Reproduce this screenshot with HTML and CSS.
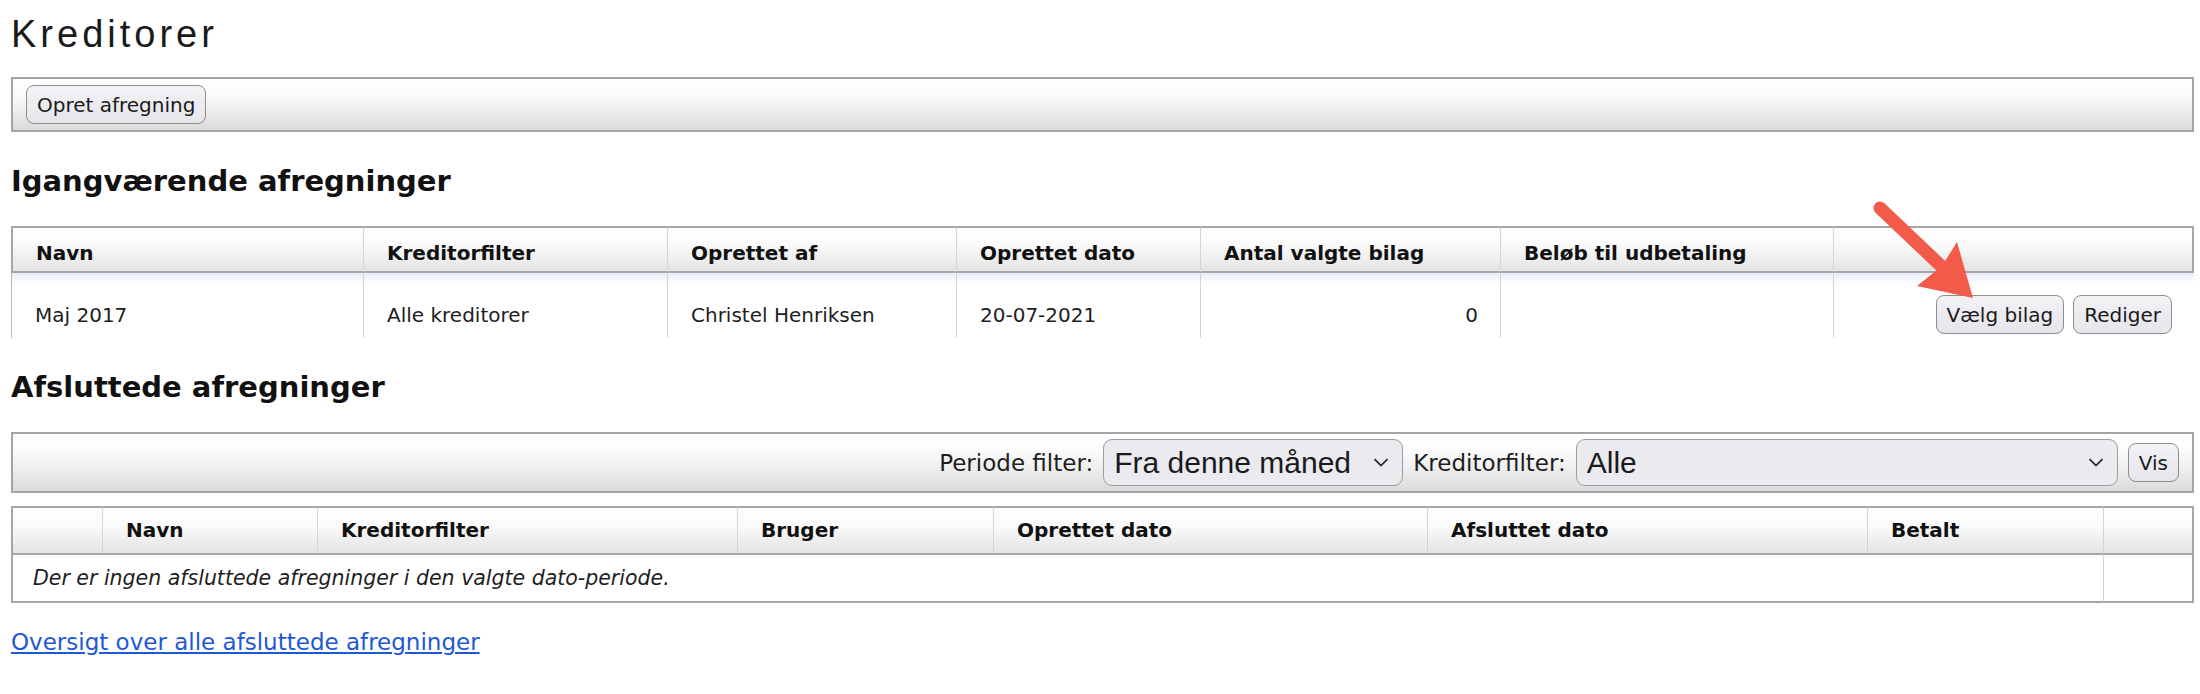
FILE: index.html
```html
<!DOCTYPE html>
<html lang="da">
<head>
  <meta charset="utf-8">
  <title>Kreditorer</title>
  <meta name="viewport" content="width=device-width, initial-scale=1.0">
  <link rel="stylesheet" href="styles.css">
</head>
<body>
<div class="page">

  <h1>Kreditorer</h1>

  <div class="toolbar toolbar-main">
    <button>Opret afregning</button>
  </div>

  <!-- Igangværende -->
  <h2>Igangværende afregninger</h2>
  <table class="grid open">
    <colgroup>
      <col><col><col><col><col><col><col>
    </colgroup>
    <thead>
      <tr>
        <th>Navn</th>
        <th>Kreditorfilter</th>
        <th>Oprettet af</th>
        <th>Oprettet dato</th>
        <th>Antal valgte bilag</th>
        <th>Beløb til udbetaling</th>
        <th></th>
      </tr>
    </thead>
    <tbody>
      <tr>
        <td>Maj 2017</td>
        <td>Alle kreditorer</td>
        <td>Christel Henriksen</td>
        <td>20-07-2021</td>
        <td class="num">0</td>
        <td></td>
        <td class="actions"><button>Vælg bilag</button><button>Rediger</button></td>
      </tr>
    </tbody>
  </table>

  <!-- Afsluttede -->
  <h2>Afsluttede afregninger</h2>
  <div class="toolbar toolbar-filter">
    <label class="filter-label" for="periode">Periode filter:</label>
    <span class="select period">
      <select id="periode">
        <option>Fra denne måned</option>
      </select>
      <svg class="chevron" width="16" height="9" viewBox="0 0 16 9"><path d="M1.5 1.2 8 7.6l6.5-6.4" fill="none" stroke="#2a2a2a" stroke-width="1.8"/></svg>
    </span>
    <label class="filter-label" for="kreditor">Kreditorfilter:</label>
    <span class="select creditor">
      <select id="kreditor">
        <option>Alle</option>
      </select>
      <svg class="chevron" width="16" height="9" viewBox="0 0 16 9"><path d="M1.5 1.2 8 7.6l6.5-6.4" fill="none" stroke="#2a2a2a" stroke-width="1.8"/></svg>
    </span>
    <button>Vis</button>
  </div>

  <table class="grid closed">
    <colgroup>
      <col><col><col><col><col><col><col><col>
    </colgroup>
    <thead>
      <tr>
        <th></th>
        <th>Navn</th>
        <th>Kreditorfilter</th>
        <th>Bruger</th>
        <th>Oprettet dato</th>
        <th>Afsluttet dato</th>
        <th>Betalt</th>
        <th></th>
      </tr>
    </thead>
    <tbody>
      <tr>
        <td class="empty" colspan="7">Der er ingen afsluttede afregninger i den valgte dato-periode.</td>
        <td></td>
      </tr>
    </tbody>
  </table>

  <p class="more"><a href="#">Oversigt over alle afsluttede afregninger</a></p>

  <!-- annotation arrow -->
  <svg class="arrow" width="130" height="120" viewBox="0 0 130 120">
    <line x1="20" y1="18" x2="80" y2="75" stroke="#f25a4a" stroke-width="13" stroke-linecap="round"/>
    <polygon points="113,108 97,52 82,76 57,96" fill="#f25a4a"/>
  </svg>

</div>
</body>
</html>
```

FILE: styles.css
```css
body {
  margin: 0;
  font-family: "DejaVu Sans", Verdana, sans-serif;
  font-size: 20px;
  color: #1e1e1e;
  background: #fff;
}

.page {
  position: relative;
  padding: 15px 6px 40px 11px;
}

h1 {
  margin: 0 0 24px;
  font-family: "Liberation Sans", Arial, sans-serif;
  font-size: 38px;
  line-height: 38px;
  font-weight: normal;
  letter-spacing: 4px;
  color: #1a1a1a;
}

h2 {
  margin: 32px 0 28px;
  font-size: 29px;
  line-height: 34px;
  color: #111;
}

/* grey bars */
.toolbar {
  display: flex;
  align-items: center;
  gap: 10px;
  padding: 0 13px;
  border: 2px solid #a4a4a4;
  background: linear-gradient(#fff 0%, #fbfbfb 30%, #ececec 65%, #dbdbdd 100%);
}

.toolbar-main {
  height: 51px;
}

.toolbar-filter {
  height: 57px;
  justify-content: flex-end;
  margin-bottom: 13px;
}

.filter-label {
  font-size: 23px;
  white-space: nowrap;
}

button {
  height: 39px;
  padding: 0 10px;
  font-family: inherit;
  font-size: 20px;
  color: #1a1a1a;
  border: 1px solid #8d8d8d;
  border-radius: 8px;
  background: linear-gradient(#f3f3f6, #e5e5ea);
  cursor: pointer;
}

.select {
  position: relative;
  display: block;
}

.select select {
  -webkit-appearance: none;
  appearance: none;
  height: 47px;
  padding: 0 40px 0 10px;
  font-family: "Liberation Sans", Arial, sans-serif;
  font-size: 30px;
  color: #1a1a1a;
  border: 1px solid #9d9d9d;
  border-radius: 9px;
  background: #eaeaef;
}

.select.period select {
  width: 300px;
}

.select.creditor select {
  width: 542px;
}

.chevron {
  position: absolute;
  right: 14px;
  top: 19px;
  pointer-events: none;
}

/* tables */
.grid {
  width: 100%;
  border-collapse: separate;
  border-spacing: 0;
  table-layout: fixed;
}

.grid th {
  text-align: left;
  font-weight: bold;
  line-height: 23px;
  color: #111;
  white-space: nowrap;
  background: linear-gradient(#fff 0%, #fafafa 40%, #e3e3e3 100%);
  border-top: 2px solid #a6a6a6;
  border-bottom: 2px solid #a6a6a6;
  border-left: 1px solid #d4d4d4;
}

.grid th:first-child {
  border-left: 2px solid #a6a6a6;
}

.grid th:last-child {
  border-right: 2px solid #a6a6a6;
}

.grid td {
  line-height: 23px;
  border-left: 1px solid #d4d4d4;
}

.open th {
  padding: 14px 22px 6px 23px;
}

.open td {
  padding: 22px 22px 4px 23px;
  vertical-align: baseline;
  background: linear-gradient(#e8eef8 0, #fff 12px);
}

.open td:first-child {
  border-left: 1px solid #b9b9b9;
}

.open col:nth-child(1) { width: 352px; }
.open col:nth-child(2) { width: 304px; }
.open col:nth-child(3) { width: 289px; }
.open col:nth-child(4) { width: 244px; }
.open col:nth-child(5) { width: 300px; }
.open col:nth-child(6) { width: 333px; }
.open col:nth-child(7) { width: 361px; }

.num {
  text-align: right;
}

.actions {
  text-align: right;
  white-space: nowrap;
}

.actions button + button {
  margin-left: 9px;
}

.closed th {
  padding: 11px 22px 11px 23px;
}

.closed td {
  height: 46px;
  padding: 0 20px;
  border-bottom: 2px solid #a6a6a6;
}

.closed td:first-child {
  border-left: 2px solid #a6a6a6;
}

.closed td:last-child {
  border-right: 2px solid #a6a6a6;
}

.closed .empty {
  font-style: italic;
  font-size: 20.5px;
}

.closed col:nth-child(1) { width: 91px; }
.closed col:nth-child(2) { width: 215px; }
.closed col:nth-child(3) { width: 420px; }
.closed col:nth-child(4) { width: 256px; }
.closed col:nth-child(5) { width: 434px; }
.closed col:nth-child(6) { width: 440px; }
.closed col:nth-child(7) { width: 236px; }
.closed col:nth-child(8) { width: 91px; }

.more {
  margin: 26px 0 0;
  font-size: 23px;
}

.more a {
  color: #1f58d6;
}

/* annotation on top of the table */
.arrow {
  position: absolute;
  left: 1860px;
  top: 190px;
}
```
